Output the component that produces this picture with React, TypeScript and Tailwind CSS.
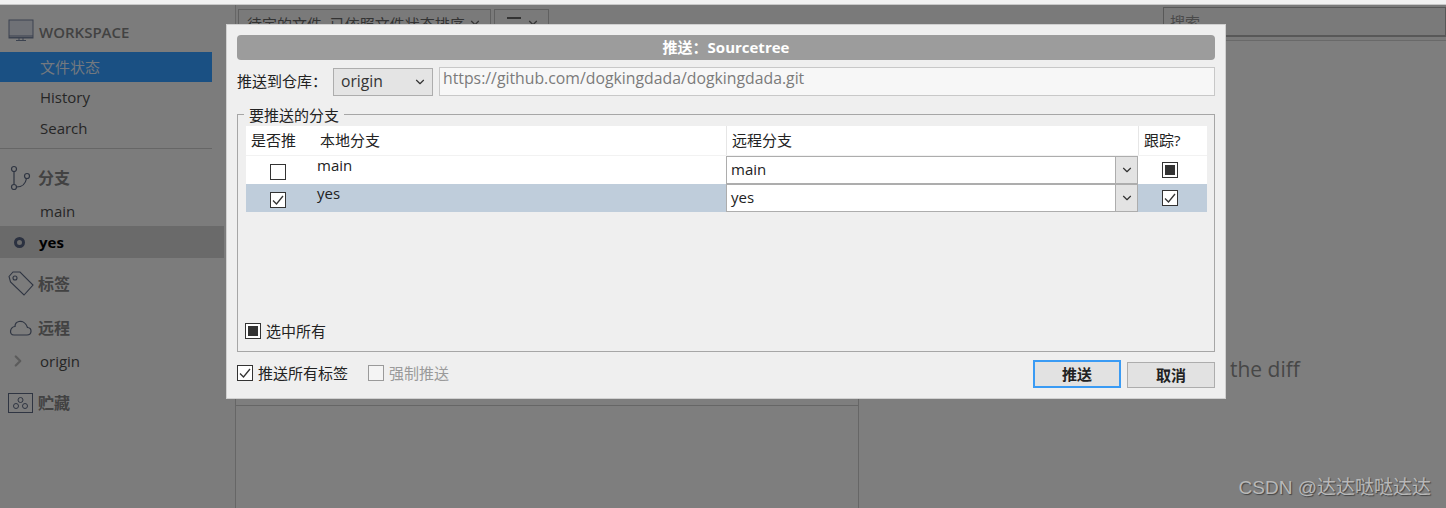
import React from 'react';
import { ChevronDown, ChevronRight } from 'lucide-react';

const FONT = "font-['Open_Sans','Noto_Sans_CJK_SC',sans-serif]";

const Check: React.FC<{ state?: 'on' | 'off' | 'mixed' | 'disabled' }> = ({ state = 'off' }) => (
    <span className={`flex h-4 w-4 shrink-0 items-center justify-center border ${state === 'disabled' ? 'border-[#9a9a9a] bg-[#f4f4f4]' : 'border-[#333] bg-white'}`}>
        {state === 'on' && (
            <svg width="14" height="14" viewBox="0 0 14 14" fill="none" stroke="#333" strokeWidth="1.300">
                <path d="M2 7.5 L5.5 11 L12 3" />
            </svg>
        )}
        {state === 'mixed' && <span className="h-[10px] w-[10px] bg-[#333]" />}
    </span>
);

const SectionHeader: React.FC<{ icon: React.ReactNode; label: string; className?: string; labelClass?: string }> = ({ icon, label, className, labelClass }) => (
    <div className={`flex items-center ${className ?? ''}`}>
        <span className="flex w-[38px] justify-center pl-[3px]">{icon}</span>
        <span className={`font-semibold leading-none text-[#424242] ${labelClass ?? 'text-[16px]'}`}>{label}</span>
    </div>
);

const Sidebar: React.FC = () => (
    <div className="flex w-[236px] shrink-0 flex-col border-r border-[#666] bg-[#7c7c7c] pr-[23px] pt-[7px]">
        <SectionHeader
            className="h-[40px]"
            label="WORKSPACE"
            labelClass="ml-[1px] text-[15px]"
            icon={
                <svg width="26" height="23" viewBox="0 0 26 23" fill="none" stroke="#3c4350" strokeWidth="1" className="-mt-[3px]">
                    <rect x="1" y="1" width="24" height="18" fill="#6f7176" />
                    <path d="M1 17h24M1 18.500h24M8 21.500h10M11 19v2M15 19v2" />
                </svg>
            }
        />
        <div className="flex h-[30px] items-center bg-[#1a5083] pl-[40px] text-[15px] text-[#74797f]">文件状态</div>
        <div className="flex h-[31px] items-center pl-[40px] text-[15px] text-[#262626]">History</div>
        <div className="flex h-[36px] items-center border-b border-[#666] pb-[5px] pl-[40px] text-[15px] text-[#262626]">Search</div>
        <SectionHeader
            className="mt-[11px] h-[36px]"
            label="分支"
            icon={
                <svg width="22" height="26" viewBox="0 0 22 26" fill="none" stroke="#2f3542" strokeWidth="1.200">
                    <circle cx="4" cy="4" r="2.500" />
                    <circle cx="4" cy="22" r="2.500" />
                    <circle cx="17" cy="11" r="2.500" />
                    <path d="M4 6.500v13M6.500 22c6 0 9-3 10-8.500" />
                </svg>
            }
        />
        <div className="flex h-[30px] items-center pl-[40px] text-[15px] text-[#262626]">main</div>
        <div className="flex h-[32px] w-[224px] shrink-0 items-center bg-[#6a6a6a]">
            <span className="ml-[14px] mr-[14px] h-[11px] w-[11px] rounded-full border-[3px] border-[#2b3140]" />
            <span className="text-[15px] font-bold text-black">yes</span>
        </div>
        <SectionHeader
            className="mt-[12px] h-[28px]"
            label="标签"
            icon={
                <svg width="26" height="26" viewBox="0 0 26 26" fill="none" stroke="#2f3542" strokeWidth="1.100">
                    <path d="M1 5.500 5 1h7l13 13-9 10L2.500 11z" />
                    <circle cx="7" cy="7" r="2" />
                </svg>
            }
        />
        <SectionHeader
            className="mt-[16px] h-[28px]"
            label="远程"
            icon={
                <svg width="23" height="16" viewBox="0 0 23 16" fill="none" stroke="#2f3542" strokeWidth="1.200">
                    <path d="M5 15h13c5 0 5.500-7 .5-7.500C17 2.500 13 1 10 1.500 7.500 2 6 4 6 6.500 1 7 -.5 15 5 15z" />
                </svg>
            }
        />
        <div className="mt-[4px] flex h-[30px] items-center text-[15px] text-[#262626]">
            <ChevronRight className="ml-[9px] mr-[13px] h-[18px] w-[18px] text-[#5c5c5c]" strokeWidth={3} />
            origin
        </div>
        <SectionHeader
            className="mt-[16px] h-[22px]"
            label="贮藏"
            icon={
                <svg width="26" height="21" viewBox="0 0 26 21" fill="none" stroke="#2f3542" strokeWidth="1">
                    <rect x=".5" y=".5" width="24" height="19" />
                    <circle cx="12.500" cy="7" r="2.500" />
                    <circle cx="8" cy="13" r="2.500" />
                    <circle cx="17" cy="13" r="2.500" />
                </svg>
            }
        />
    </div>
);

const Backdrop: React.FC = () => (
    <div className="flex min-w-0 flex-1 flex-col bg-[#7e7e7e]">
        <div className="flex h-[36px] items-start border-b border-[#696969] bg-[#7a7a7a] pt-[4px] pl-[2px]">
            <div className="flex h-[30px] w-[253px] items-start justify-between overflow-hidden border border-[#606060] pl-[8px] pr-[8px] pt-[3px] text-[15px] whitespace-nowrap text-[#333]">
                待定的文件, 已依照文件状态排序
                <ChevronDown className="mt-[3px] h-[14px] w-[14px] shrink-0 text-[#333]" />
            </div>
            <div className="ml-[3px] flex h-[30px] w-[55px] items-start border border-[#606060] pl-[12px] pt-[6px]">
                <span className="mt-[1px] h-[9px] w-[14px] border-y-2 border-[#333]" />
                <ChevronDown className="ml-[5px] h-[14px] w-[14px] text-[#333]" />
            </div>
            <div className="-mt-[2px] ml-auto h-[30px] w-[283px] border border-b-2 border-[#585858] pl-[6px] pt-[3px] text-[15px] text-[#4a4a4a]">搜索</div>
        </div>
        <div className="flex min-h-0 flex-1">
            <div className="flex w-[623px] flex-col border-r border-[#666]">
                <div className="h-[365px] border-b border-[#666]" />
            </div>
            <div className="flex flex-1 flex-col">
                <div className="mt-[314px] pl-[371px] text-[21px] leading-[28px] text-[#474747]">the diff</div>
            </div>
        </div>
    </div>
);

const BranchRow: React.FC<{ name: string; selected?: boolean; push: 'on' | 'off'; track: 'on' | 'mixed' }> = ({ name, selected, push, track }) => (
    <div className={`flex h-[28px] ${selected ? 'bg-[#bfcddb]' : 'bg-white'}`}>
        <div className="flex w-[64px] items-center justify-center pt-[4px] pr-[1px]"><Check state={push} /></div>
        <div className="w-[416px] pl-[7px] text-[15px] leading-[18px] text-[#222]">{name}</div>
        <div className="flex w-[412px] border border-[#adadad] bg-white">
            <span className="flex-1 pl-[4px] text-[15px] leading-[24px] text-[#222]">{name}</span>
            <span className="flex w-[22px] items-center justify-center border-l border-[#adadad] bg-[#e3e3e3]">
                <ChevronDown className="h-[14px] w-[14px] text-[#333]" />
            </span>
        </div>
        <div className="flex flex-1 items-center justify-center pr-[5px]"><Check state={track} /></div>
    </div>
);

const PushDialog: React.FC = () => (
    <div className="absolute left-[226px] top-[24px] flex h-[375px] w-[1000px] flex-col border border-[#d0d0d0] bg-[#efefef] px-[10px] pt-[10px]">
        <div className="flex h-[25px] shrink-0 items-center justify-center rounded-[4px] bg-[#9c9c9c] text-[15px] font-bold text-white">推送：Sourcetree</div>
        <div className="mt-[7px] flex h-[29px] shrink-0 items-center">
            <span className="w-[96px] text-[15px] text-[#222]">推送到仓库：</span>
            <div className="flex h-[28px] w-[100px] items-center justify-between border border-[#adadad] bg-[#e4e4e4] pl-[7px] pr-[5px] text-[15.700px] text-[#333]">
                origin
                <ChevronDown className="h-[14px] w-[14px] text-[#333]" />
            </div>
            <div className="ml-[6px] h-[29px] flex-1 border border-[#c8c8c8] bg-[#f7f7f7] pl-[3px] text-[15.800px] leading-[20px] text-[#7b7b7b]">
                https://github.com/dogkingdada/dogkingdada.git
            </div>
        </div>
        <div className="relative mt-[18px] h-[238px] shrink-0 border border-[#a6a6a6] pl-[8px] pr-[7px] pt-[11px]">
            <span className="absolute left-[6px] top-[-11px] bg-[#efefef] px-[5px] text-[15px] leading-[22px] text-[#222]">要推送的分支</span>
            <div className="flex h-[30px] border-b border-[#f2f2f2] bg-white text-[15px] leading-[28px] text-[#222]">
                <span className="w-[74px] pl-[5px]">是否推</span>
                <span className="w-[406px]">本地分支</span>
                <span className="w-[412px] border-l border-[#e6e6e6] pl-[5px]">远程分支</span>
                <span className="flex-1 border-l border-[#e6e6e6] pl-[5px]">跟踪?</span>
            </div>
            <BranchRow name="main" push="off" track="mixed" />
            <BranchRow name="yes" selected push="on" track="on" />
            <div className="absolute bottom-[9px] left-[7px] flex items-center gap-[5px] text-[15px] text-[#222]">
                <Check state="mixed" />
                选中所有
            </div>
        </div>
        <div className="flex flex-1 items-start pt-[8px]">
            <div className="mt-[2px] flex items-center gap-[5px] text-[15px] text-[#222]">
                <Check state="on" />
                推送所有标签
            </div>
            <div className="ml-[20px] mt-[2px] flex items-center gap-[5px] text-[15px] text-[#9a9a9a]">
                <Check state="disabled" />
                强制推送
            </div>
            <button className="ml-auto h-[28px] w-[88px] border-2 border-[#3a9bf4] bg-[#e2e2e2] text-[15px] font-bold text-[#222]">推送</button>
            <button className="ml-[6px] mt-[2px] h-[26px] w-[88px] border border-[#adadad] bg-[#e2e2e2] text-[15px] font-bold text-[#222]">取消</button>
        </div>
    </div>
);

const App: React.FC = () => {
    return (
        <div className={`relative h-[508px] w-[1446px] overflow-hidden bg-[#f1f1f1] pt-[4px] ${FONT}`}>
            <div className="flex h-[504px] border-t border-[#c8c8c8]">
                <Sidebar />
                <Backdrop />
            </div>
            <PushDialog />
            <div className="absolute bottom-[8px] right-[15px] font-['Liberation_Sans','Noto_Sans_CJK_SC',sans-serif] text-[19px] leading-[24px] text-[#b8b8b8] [text-shadow:1px_1px_1px_#444]">CSDN @达达哒哒达达</div>
        </div>
    );
};

export default App;
